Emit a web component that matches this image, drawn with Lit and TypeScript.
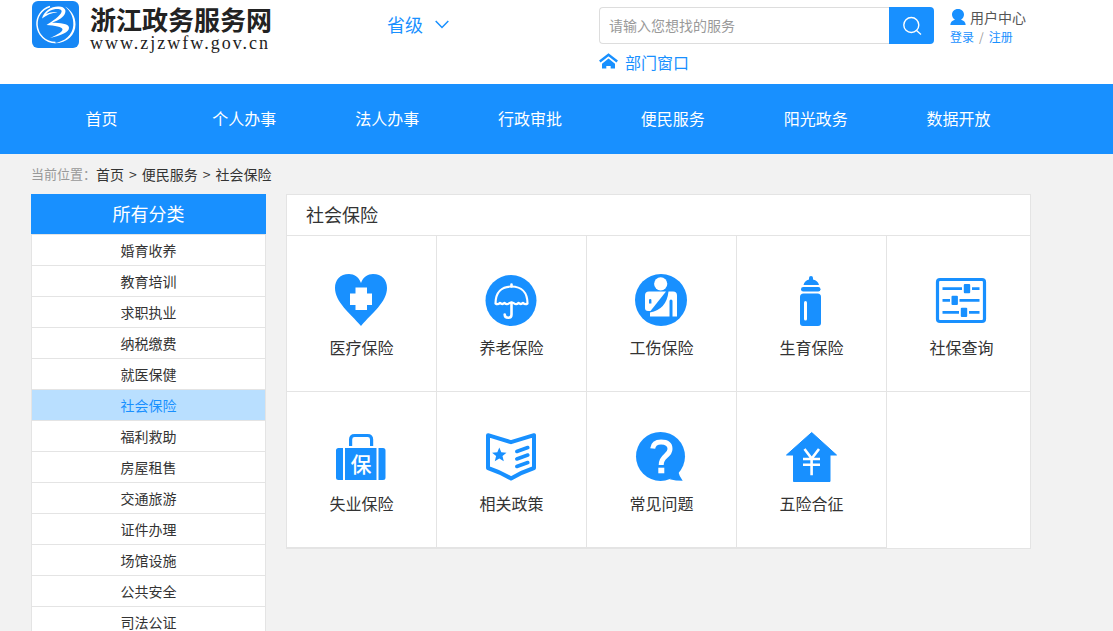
import { LitElement, html, svg, css } from "lit";
import { customElement, property, state } from "lit/decorators.js";

const ICONS: Record<string, unknown> = {
  heart: svg`
    <path fill="currentColor" d="M26 9C24 3 19 0 14 0 5 0 0 6 0 14c0 14 15 25 26 38 11-13 26-24 26-38C52 6 47 0 38 0 33 0 28 3 26 9z"/>
    <path fill="#fff" d="M20.500 13.500h11.500v6h5v11.500h-5v5h-11.500v-5h-5.500v-11.500h5.500z"/>`,
  umbrella: svg`
    <circle cx="26" cy="26.500" r="25.500" fill="currentColor"/>
    <g fill="none" stroke="#fff" stroke-width="2.200" stroke-linecap="round" stroke-linejoin="round">
      <path d="M10.500 29.500C10.500 18 17 12.500 26.500 12.500S42.500 18 42.500 29.500q-2.200 1.600-4.500-.6-2.200 2.200-4.500 0-2.200 2.200-4.500.4l-2.500-.9-2.500.9q-2.200 1.800-4.500-.4-2.200 2.200-4.500 0-2.200 2.200-4.500.6z"/>
      <path stroke-width="2.600" d="M26.500 10.500v2M26.500 30v10.500q0 3.200-3.200 3.200-3.600 0-3.600-3.200"/>
    </g>`,
  sling: svg`
    <circle cx="26" cy="26" r="26" fill="currentColor"/>
    <circle cx="25.700" cy="9.800" r="6.600" fill="#fff"/>
    <path fill="#fff" d="M14 17.500h17L15.500 37H13q-3 0-3-3V21.500q0-4 4-4z"/>
    <path fill="#fff" d="M15 38.500q16.500-3 18.500-21h4.500q4 0 4 4v21h-4.500V27q0-1.500-1.500-1.500T34.500 27v15.500H15z"/>
    <path fill="currentColor" d="M14 26q0-1 1.200-1t1.200 1v3.500h-2.400z"/>`,
  bottle: svg`
    <path fill="currentColor" d="M24 4q0-2 2-2t2 2v1.500q5 1.300 6 5.500H18.500q1-4.200 5.500-5.500z"/>
    <rect x="16" y="13" width="19.500" height="4.500" rx="2.200" fill="currentColor"/>
    <path fill="currentColor" d="M15 23q0-3.500 3.500-3.500h14Q36 19.500 36 23v26q0 3-3 3H18q-3 0-3-3z"/>
    <rect x="19" y="27" width="3" height="19.500" rx="1.500" fill="#fff"/>`,
  sliders: svg`
    <rect x="2.500" y="5.500" width="47" height="42" rx="2.500" fill="none" stroke="currentColor" stroke-width="3.200"/>
    <path stroke="currentColor" stroke-width="2.800" d="M7.500 14.700H27M37 14.700h7.500M7.500 26.300H15M24.500 26.300h20M7.500 38.300H24M34 38.300h10.500"/>
    <g fill="currentColor">
      <rect x="28.800" y="10" width="6.400" height="9.200" rx="1"/>
      <rect x="16.500" y="21.700" width="6.400" height="9.200" rx="1"/>
      <rect x="25.800" y="33.700" width="6.400" height="9.200" rx="1"/>
    </g>`,
  briefcase: svg`
    <path fill="none" stroke="currentColor" stroke-width="3.200" d="M15.600 16V9.500q0-4 4-4h13q4 0 4 4V16"/>
    <path fill="currentColor" d="M3.500 18H8v32H3.500Q1 50 1 47.500v-27Q1 18 3.500 18zM10 18h31.500v32H10zM43.500 18h4.500q2.500 0 2.500 2.500v27Q50.500 50 48 50h-4.500z"/>
    <text x="26" y="41.500" text-anchor="middle" font-size="21" font-weight="500" fill="#fff">保</text>`,
  booklet: svg`
    <path fill="none" stroke="currentColor" stroke-width="4" stroke-linejoin="round" d="M3 5.200l23 7 23-7V38Q37 42 26 48.500 15 42 3 38z"/>
    <path fill="currentColor" d="M14.300 17.500l2 4.800 5.200.4-4 3.400 1.300 5.100-4.500-2.800-4.500 2.800 1.300-5.100-4-3.400 5.200-.4z"/>
    <path stroke="currentColor" stroke-width="3.600" stroke-linecap="round" d="M31.800 21.500l11-4M31.800 29l11-4M31.800 36.500l11-4"/>`,
  question: svg`
    <circle cx="25.500" cy="26.400" r="24.500" fill="currentColor"/>
    <path fill="currentColor" d="M43 41q1.500 6 4.700 9.700-7 0-13-1.500z"/>
    <path fill="none" stroke="#fff" stroke-width="5" d="M17.700 18.500Q18.500 12 26 12q9 0 9 7 0 3.500-4.300 7-4.500 3.800-4.500 9"/>
    <rect x="23.300" y="37.700" width="6" height="5.600" fill="#fff"/>`,
  house: svg`
    <path fill="currentColor" stroke="currentColor" stroke-linejoin="round" d="M26.700 2.500L51.500 25H45v26.500H8.500V25h-7z"/>
    <path fill="none" stroke="#fff" stroke-width="2.600" d="M19.500 19l7.200 9.500L34 19M18 29h17M18 34.700h17M26.600 28v17.300"/>`,
};

@customElement("service-tile")
class ServiceTile extends LitElement {
  @property() label = "";
  @property() icon = "";

  static styles = css`
    :host { display: block; }
    .tile {
      display: flex; flex-direction: column; align-items: center; gap: 9px;
      padding: 38px 0 32px; color: #333; text-decoration: none;
      font-size: 16px; line-height: 24px;
    }
    .icon { display: block; width: 53px; height: 52px; color: #1890ff; }
  `;

  render() {
    return html`<a class="tile" href="#">
      <svg class="icon" viewBox="0 0 53 52" aria-hidden="true">${ICONS[this.icon]}</svg>
      <span>${this.label}</span>
    </a>`;
  }
}

@customElement("app-root")
class AppRoot extends LitElement {
  @state() private current = "社会保险";

  private nav = ["首页", "个人办事", "法人办事", "行政审批", "便民服务", "阳光政务", "数据开放"];
  private categories = [
    "婚育收养", "教育培训", "求职执业", "纳税缴费", "就医保健", "社会保险", "福利救助",
    "房屋租售", "交通旅游", "证件办理", "场馆设施", "公共安全", "司法公证",
  ];
  private services = [
    ["heart", "医疗保险"], ["umbrella", "养老保险"], ["sling", "工伤保险"],
    ["bottle", "生育保险"], ["sliders", "社保查询"], ["briefcase", "失业保险"],
    ["booklet", "相关政策"], ["question", "常见问题"], ["house", "五险合征"],
  ];

  static styles = css`
    :host {
      display: block; min-height: 100vh; background: #f2f2f2; color: #333;
      font-family: "Noto Sans CJK SC", sans-serif; font-size: 14px;
    }
    * { box-sizing: border-box; }
    a { color: inherit; text-decoration: none; }
    .wrap { max-width: 1031px; padding-left: 31px; }
    .top { background: #fff; }
    .header { display: grid; grid-template-columns: 356px 212px 335px 1fr; min-height: 84px; align-items: start; }
    .brand { display: flex; gap: 11px; padding: 1px 0 0 1px; }
    .mark { display: block; width: 47px; height: 47px; }
    .name { display: block; font-size: 26px; line-height: 36px; font-weight: 700; color: #222; white-space: nowrap; }
    .site {
      display: block; font-family: "Liberation Serif", serif; font-size: 18px; line-height: 12px;
      letter-spacing: 2px; color: #222;
    }
    .region {
      display: flex; align-items: center; gap: 12px; padding: 0; margin-top: 12px; border: 0;
      background: none; font: inherit; font-size: 18px; line-height: 24px; color: #1890ff;
    }
    .chevron { width: 14px; height: 9px; }
    .search { display: flex; height: 37px; margin-top: 7px; }
    .field {
      flex: 1; min-width: 0; padding: 0 9px 2px; border: 1px solid #ddd; border-right: 0;
      border-radius: 4px 0 0 4px; font: inherit; background: #fff; color: #333; outline: 0;
    }
    .field::placeholder { color: #999; opacity: 1; }
    .go {
      display: grid; place-items: center; width: 45px; padding: 0; border: 0;
      border-radius: 0 4px 4px 0; background: #1890ff;
    }
    .glass { width: 20px; height: 20px; }
    .windows { display: inline-flex; align-items: center; gap: 7px; margin-top: 6px; font-size: 16px; line-height: 24px; color: #1890ff; }
    .roof { width: 19px; height: 16px; margin-bottom: 2px; }
    .user { padding: 7px 0 0 16px; white-space: nowrap; }
    .center { display: flex; align-items: center; gap: 4px; line-height: 20px; color: #555; }
    .person { width: 16px; height: 16px; }
    .sign { display: flex; gap: 5px; font-size: 12px; line-height: 20px; color: #1890ff; }
    .slash { color: #999; }
    .bar { background: #1890ff; }
    .menu { display: grid; grid-template-columns: repeat(7, 1fr); padding-bottom: 2px; text-align: center; color: #fff; font-size: 16px; line-height: 68px; }
    .nav { max-width: 1030px; padding-left: 30px; }
    .crumbs { display: flex; gap: 5px; padding: 10px 0; line-height: 20px; }
    .here { color: #999; font-size: 13px; margin-right: -5px; }
    .cols { display: grid; grid-template-columns: 235px minmax(0, 1fr); gap: 20px; align-items: start; }
    .side { background: #fff; }
    .all { margin: 0; padding-bottom: 2px; background: #1890ff; color: #fff; font-size: 18px; font-weight: 400; line-height: 38px; text-align: center; }
    .list { margin: 0; padding: 0; list-style: none; border: 1px solid #e4e4e4; border-bottom: 0; }
    .cat { display: block; border-bottom: 1px solid #e4e4e4; line-height: 30px; text-align: center; }
    .on { background: #b9dfff; color: #1890ff; }
    .panel { border: 1px solid #e4e4e4; background: #fff; overflow: hidden; }
    .title { margin: 0; padding: 0 0 2px 19px; border-bottom: 1px solid #e4e4e4; font-size: 18px; font-weight: 400; line-height: 38px; }
    .grid { display: grid; grid-template-columns: repeat(5, 150px); }
    .cell { border-right: 1px solid #e4e4e4; border-bottom: 1px solid #e4e4e4; }
  `;

  render() {
    return html`
      <header class="top">
        <div class="wrap header">
          <a class="brand" href="#">
            <svg class="mark" viewBox="0 0 47 47" aria-hidden="true">
              <rect width="47" height="47" rx="6" fill="#1687f5"/>
              <path fill="none" stroke="#fff" stroke-width="1.500" d="M18 5.500C9 8.500 4.500 16 5 24c.8 10 8.500 17.500 18.500 17.500"/>
              <path fill="#fff" d="M33 5.500c7 4 10.500 10.500 10.500 18C43.500 34 35 42.500 22 42.300 33 40.500 40.500 34 41.300 24.500 41.800 17 39 10.500 33 5.500z"/>
              <path fill="#fff" d="M10 17.500C12 9.500 20 5 27 5.500c6 .4 7.800 4 5.500 8-2.500 4.300-8 6.500-12.500 8.300 8 .2 16.500.7 17 4.700.5 4.500-8 8-19 10.500 8-3.500 12.500-6.500 12.500-8.500 0-2.500-8-4-16-4.500 6-4 13.500-8.500 15-13 .8-2.500-2-3.500-6-3-4 .6-7.500 2.500-9.500 5 4-2 8.500-2.500 11.500-1.700-6 .3-11 3.200-15.500 6.200z"/>
            </svg>
            <span>
              <span class="name">浙江政务服务网</span>
              <span class="site">www.zjzwfw.gov.cn</span>
            </span>
          </a>
          <button class="region" type="button">省级
            <svg class="chevron" viewBox="0 0 14 9" aria-hidden="true"><path d="M.7 1L7 7.500 13.300 1" fill="none" stroke="currentColor" stroke-width="1.500"/></svg>
          </button>
          <div>
            <form class="search" @submit=${(e: Event) => e.preventDefault()}>
              <input class="field" type="search" aria-label="请输入您想找的服务" placeholder="请输入您想找的服务">
              <button class="go" type="submit" aria-label="搜索">
                <svg class="glass" viewBox="0 0 20 20" aria-hidden="true"><g fill="none" stroke="#fff" stroke-width="1.400"><circle cx="9.300" cy="9" r="7.500"/><path d="M14.500 14.500l4.500 4"/></g></svg>
              </button>
            </form>
            <a class="windows" href="#">
              <svg class="roof" viewBox="0 0 19 16" aria-hidden="true"><path d="M.8 8.500L9.500 1.800l8.700 6.700" fill="none" stroke="currentColor" stroke-width="2.400"/><path d="M3 10.800L9.500 5.600l6.500 5.200V15.500h-4.300V13H7.300v2.500H3z" fill="currentColor"/></svg>
              部门窗口
            </a>
          </div>
          <div class="user">
            <a class="center" href="#">
              <svg class="person" viewBox="0 0 16 16" aria-hidden="true"><path fill="#1890ff" d="M8 0c3.800 0 6 2.500 6 5.500 0 2.300-1.200 4-3 5.200 2.800.6 4.500 2.200 4.700 5.300H.3c.2-3.100 1.900-4.700 4.700-5.300C3.200 9.500 2 7.800 2 5.500 2 2.500 4.200 0 8 0z"/></svg>
              用户中心
            </a>
            <div class="sign"><a href="#">登录</a><span class="slash">/</span><a href="#">注册</a></div>
          </div>
        </div>
      </header>
      <div class="bar">
        <nav class="nav menu">${this.nav.map((n) => html`<a href="#">${n}</a>`)}</nav>
      </div>
      <main class="wrap">
        <div class="crumbs">
          <span class="here">当前位置：</span><a href="#">首页</a><span>&gt;</span><a href="#">便民服务</a><span>&gt;</span><a href="#">社会保险</a>
        </div>
        <div class="cols">
          <aside class="side">
            <h2 class="all">所有分类</h2>
            <ul class="list">
              ${this.categories.map((c) => html`<li><a class="cat ${c === this.current ? "on" : ""}" href="#">${c}</a></li>`)}
            </ul>
          </aside>
          <section class="panel">
            <h1 class="title">${this.current}</h1>
            <div class="grid">
              ${this.services.map(([icon, label]) => html`<service-tile class="cell" icon=${icon} label=${label}></service-tile>`)}
            </div>
          </section>
        </div>
      </main>
    `;
  }
}
